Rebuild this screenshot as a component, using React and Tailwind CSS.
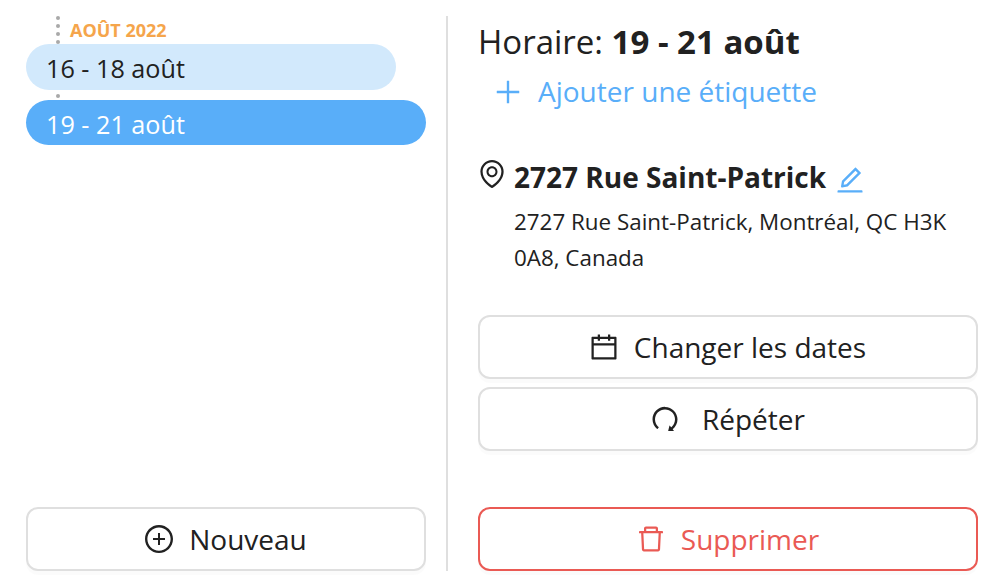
import React from "react";
import {
  AiOutlineCalendar,
  AiOutlineDelete,
  AiOutlineEdit,
  AiOutlineEnvironment,
  AiOutlinePlus,
  AiOutlinePlusCircle,
  AiOutlineRedo,
} from "react-icons/ai";

function ActionButton({ icon: Icon, children, tone = "border-[#dfdfdf] text-[#212121]", gap = "gap-4", className = "" }) {
  return (
    <button
      type="button"
      className={`flex h-16 w-full shrink-0 items-center justify-center rounded-xl border-2 bg-white text-[28px] leading-none shadow-[0_4px_0_rgba(0,0,0,0.016)] ${tone} ${gap} ${className}`}
    >
      <Icon className="-mx-0.5 size-8 shrink-0" />
      <span className="whitespace-nowrap leading-[44px]">{children}</span>
    </button>
  );
}

function Dot() {
  return <span className="block size-1 rounded-full bg-[#a9a9a9]" />;
}

export default function App() {
  return (
    <main className="flex h-[586px] w-[996px] overflow-hidden bg-white pt-4 pb-[15px] pl-[26px] font-['Open_Sans','Noto_Sans',sans-serif] text-[#212121]">
      <aside className="flex w-[422px] shrink-0 flex-col border-r-2 border-[#dfdfdf] pr-5">
        <div className="flex h-7 shrink-0 pl-[30px]">
          <div className="flex flex-col gap-[4px]">
            <Dot />
            <Dot />
            <Dot />
            <Dot />
          </div>
          <span className="ml-2.5 text-[18px] leading-7 font-bold whitespace-nowrap text-[#f5a54b]">AOÛT 2022</span>
        </div>
        <div className="h-[46px] w-[370px] shrink-0 rounded-full bg-[#d2e9fc] pl-5 text-[25.2px] leading-[49px]">16 - 18 août</div>
        <div className="flex h-2.5 shrink-0 pt-1 pl-[30px]">
          <Dot />
        </div>
        <div className="h-[45px] w-[400px] shrink-0 rounded-full bg-[#59aef9] pl-5 text-[25.2px] leading-[49px] text-white">19 - 21 août</div>
        <ActionButton icon={AiOutlinePlusCircle} className="mt-auto">Nouveau</ActionButton>
      </aside>

      <section className="ml-[30px] flex w-[500px] shrink-0 flex-col">
        <h1 className="h-[52px] shrink-0 text-[33px] leading-[52px] whitespace-nowrap">
          Horaire: <strong className="font-bold">19 - 21 août</strong>
        </h1>
        <button type="button" className="flex h-12 items-center gap-3.5 pl-3.5 text-[28px] text-[#59aef9]">
          <AiOutlinePlus className="size-8" />
          <span className="pb-0.5 whitespace-nowrap">Ajouter une étiquette</span>
        </button>
        <div className="mt-9 flex">
          <AiOutlineEnvironment className="mt-1.5 -ml-0.5 size-8 shrink-0" />
          <div className="ml-1.5">
            <div className="flex h-[52px] items-center">
              <h2 className="pb-[3px] text-[28px] font-bold whitespace-nowrap">2727 Rue Saint-Patrick</h2>
              <AiOutlineEdit className="mt-[3px] ml-2 size-8 text-[#59aef9]" />
            </div>
            <p className="text-[22.4px] leading-9 whitespace-nowrap">
              2727 Rue Saint-Patrick, Montréal, QC H3K
              <br />
              0A8, Canada
            </p>
          </div>
        </div>
        <div className="mt-auto flex flex-col gap-2">
          <ActionButton icon={AiOutlineCalendar}>Changer les dates</ActionButton>
          <ActionButton icon={AiOutlineRedo} gap="gap-[23px]">Répéter</ActionButton>
        </div>
        <ActionButton icon={AiOutlineDelete} tone="border-[#ea5a54] text-[#ea5a54]" className="mt-14">Supprimer</ActionButton>
      </section>
    </main>
  );
}
